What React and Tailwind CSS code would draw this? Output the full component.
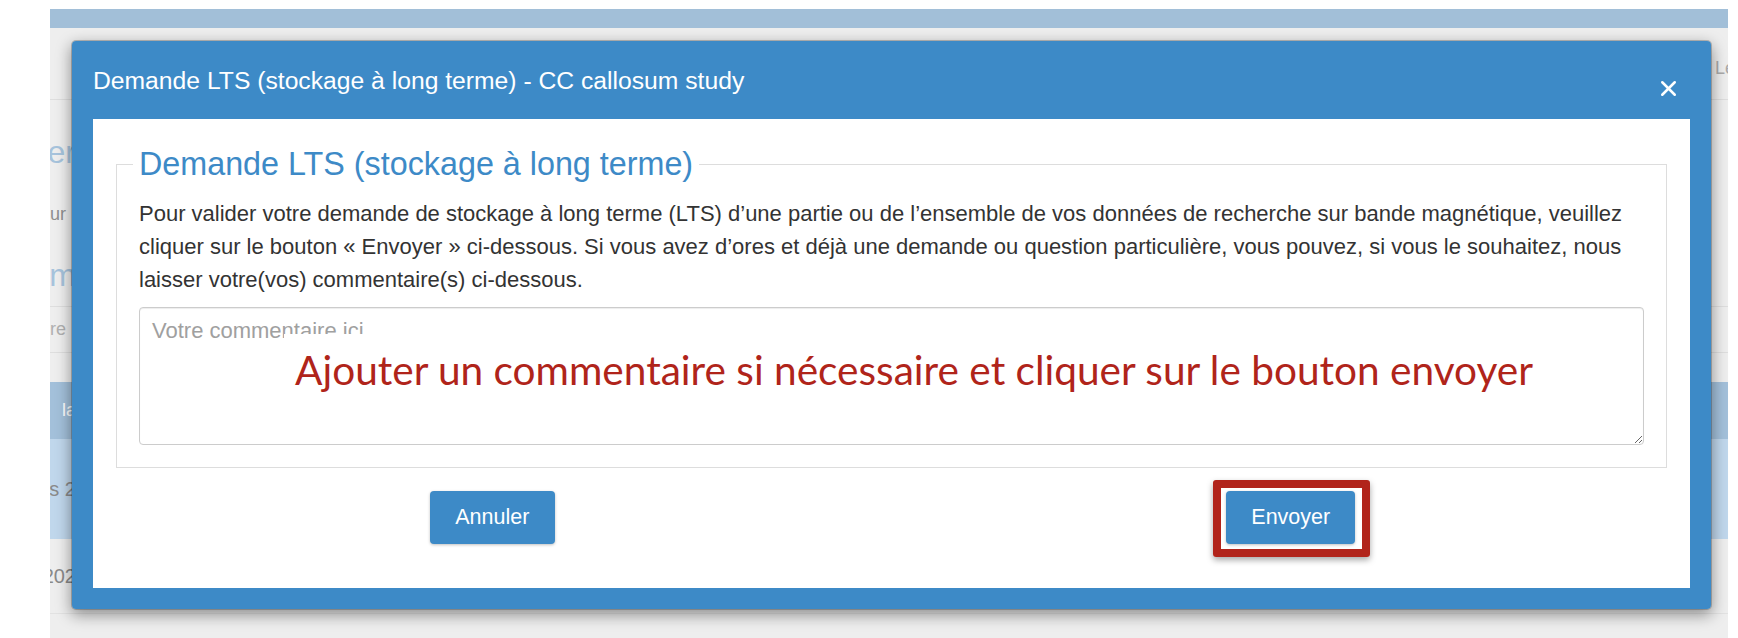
import { X } from 'lucide-react';

const BgRow = ({ className, left, right }) => (
  <div className={className}>
    <div className="flex w-[26px] justify-end overflow-hidden whitespace-nowrap">{left}</div>
    <div className="flex-1" />
    <div className="w-[16px] overflow-hidden whitespace-nowrap">{right}</div>
  </div>
);

const App = () => {
  return (
    <div className="relative h-[638px] w-[1738px] overflow-hidden bg-white font-['Liberation_Sans',Arial,sans-serif]">
      {/* page behind the modal */}
      <div className="ml-[50px] mt-[9px] flex h-[629px] w-[1678px] flex-col bg-[#eeeeee]">
        <div className="h-[19px] bg-[#a2bfd8]" />
        <BgRow
          className="flex h-[72px] items-center border-b border-[#dedede] pt-[10px]"
          right={<span className="pl-[3px] text-[18px] text-[#aaaaaa]">Le</span>}
        />
        <div className="h-[20px]" />
        <BgRow
          className="flex h-[64px] items-center"
          left={<span className="text-[32px] text-[#a6c3dc]">Demander</span>}
        />
        <div className="h-[12px]" />
        <BgRow
          className="flex h-[36px] items-center"
          left={<span className="pr-[10px] text-[18px] text-[#8f8f8f]">ur</span>}
        />
        <div className="h-[11px]" />
        <BgRow
          className="flex h-[64px] items-center border-b border-[#dedede]"
          left={<span className="text-[32px] text-[#a6c3dc]">Forum</span>}
        />
        <BgRow
          className="flex h-[46px] items-center border-b border-[#dedede]"
          left={<span className="pr-[10px] text-[18px] text-[#b0b0b0]">re</span>}
        />
        <div className="h-[29px]" />
        <BgRow
          className="flex h-[57px] items-center bg-[#a3c0da]"
          left={<span className="text-[18px] text-white">la</span>}
        />
        <BgRow
          className="flex h-[100px] items-center bg-[#c0d7ec]"
          left={<span className="text-[20px] text-[#8a8a8a]">s 2</span>}
        />
        <BgRow
          className="flex h-[75px] items-center border-b border-[#e2e2e2]"
          left={<span className="text-[20px] text-[#8a8a8a]">202</span>}
        />
      </div>

      {/* modal */}
      <div className="absolute left-[71px] top-[40px] flex h-[570px] w-[1641px] flex-col rounded-[5px] border border-[rgba(0,0,0,0.2)] bg-[#3d8ac7] bg-clip-padding shadow-[0_5px_15px_rgba(0,0,0,0.4)]">
        <div className="relative flex h-[78px] items-center px-[21px] pt-[2px]">
          <h4 className="text-[24.7px] leading-[1.2] text-white">
            Demande LTS (stockage à long terme) - CC callosum study
          </h4>
          <button className="absolute right-[30px] top-[35px] text-white">
            <X size={25} strokeWidth={2.4} />
          </button>
        </div>

        <div className="mx-[21px] mb-[21px] flex-1 bg-white">
          <div className="px-[23px] pt-[27px]">
            <fieldset className="border border-[#dddddd] px-[16px] pb-[22px]">
              <legend className="px-[6px] text-[32.3px] leading-[36px] text-[#3d8ac7]">
                Demande LTS (stockage à long terme)
              </legend>
              <div className="px-[6px]">
                <p className="mt-[15px] text-[22px] leading-[33px] text-[#333333]">
                  Pour valider votre demande de stockage à long terme (LTS) d’une partie ou de l’ensemble de vos données de recherche sur bande magnétique, veuillez cliquer sur le bouton « Envoyer » ci-dessous. Si vous avez d’ores et déjà une demande ou question particulière, vous pouvez, si vous le souhaitez, nous laisser votre(vos) commentaire(s) ci-dessous.
                </p>
                <div className="relative mt-[11px]">
                  <textarea
                    className="block h-[138px] w-full rounded-[4px] border border-[#cccccc] px-[12px] py-[6px] text-[22px] leading-[33px] text-[#555555] shadow-[inset_0_1px_1px_rgba(0,0,0,0.075)] outline-none placeholder:text-[#a0a0a0]"
                    placeholder="Votre commentaire ici"
                  />
                  <div className="absolute left-[145px] top-[27px] flex h-[72px] w-[1300px] items-center bg-white pl-[11px]">
                    <span className="whitespace-nowrap font-['Lato',sans-serif] text-[40.6px] text-[#b0241a]">
                      Ajouter un commentaire si nécessaire et cliquer sur le bouton envoyer
                    </span>
                  </div>
                </div>
              </div>
            </fieldset>
          </div>

          <div className="mt-[23px] grid grid-cols-2">
            <div className="flex justify-center">
              <button className="h-[53px] w-[125px] rounded-[4px] bg-[#3d8ac7] text-[21.5px] text-white shadow-[0_1px_3px_rgba(0,0,0,0.25)]">
                Annuler
              </button>
            </div>
            <div className="flex justify-center">
              <div className="relative">
                <button className="h-[53px] w-[129px] rounded-[4px] bg-[#3d8ac7] text-[21.5px] text-white shadow-[0_1px_3px_rgba(0,0,0,0.25)]">
                  Envoyer
                </button>
                <div className="absolute -left-[13px] -top-[11px] h-[77px] w-[157px] rounded-[3px] border-[8px] border-[#b1241b] shadow-[0_3px_6px_rgba(0,0,0,0.35)]" />
              </div>
            </div>
          </div>
        </div>
      </div>
    </div>
  );
};

export default App;
